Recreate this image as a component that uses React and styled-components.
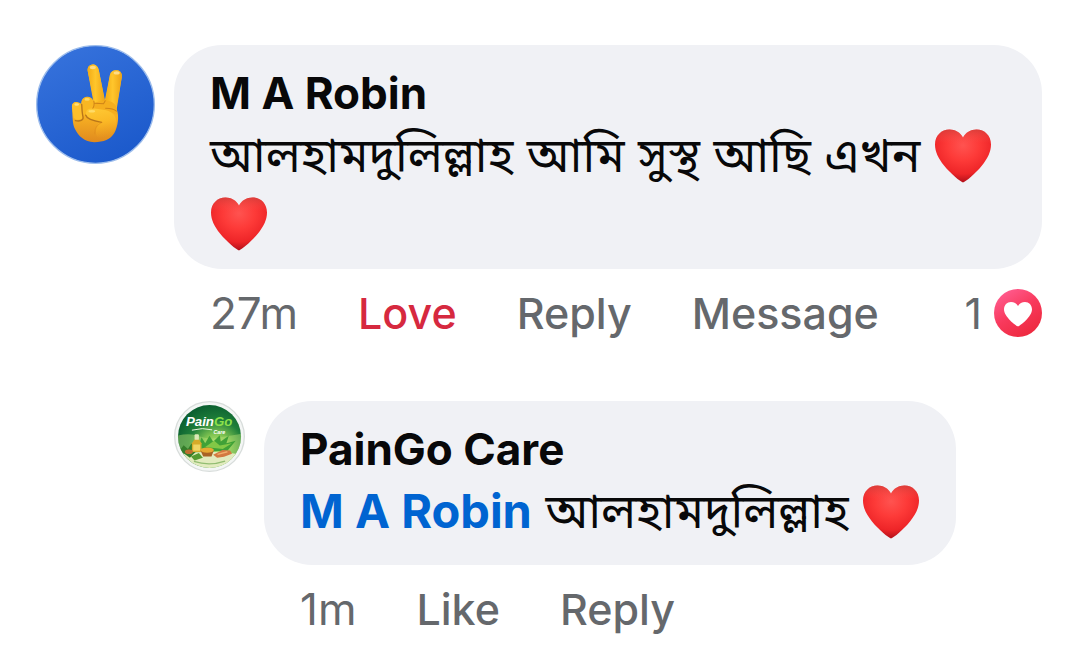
import React from 'react';
import styled, { createGlobalStyle } from 'styled-components';


const GlobalStyle = createGlobalStyle`
    * { box-sizing: border-box; }
    body {
        margin: 0;
        background: #ffffff;
        color: #080809;
        font-family: Inter, "Noto Sans Bengali", "Noto Sans", sans-serif;
    }
`

const Thread = styled.main`
    display: flex;
    flex-direction: column;
    gap: 60px;
    padding: 45px 36px 0 36px;
`

const Comment = styled.article`
    display: flex;
    align-items: flex-start;
    gap: 19px;
    margin-left: ${(props) => (props.$nested ? '138px' : '0')};
`

const AvatarLink = styled.a`
    flex: none;
    width: ${(props) => props.$size};
    height: ${(props) => props.$size};

    svg { display: block; width: 100%; height: 100%; }
`

const Content = styled.div`
    flex: 1;
    min-width: 0;
`

const Bubble = styled.div`
    width: fit-content;
    max-width: 100%;
    padding: ${(props) => (props.$nested ? '20px 36px' : '20px 36px 12px')};
    border-radius: 48px;
    background: #f0f1f5;
`

const Author = styled.a`
    display: block;
    color: inherit;
    font-size: 44px;
    font-weight: 700;
    line-height: 56px;
    text-decoration: none;
`

const Message = styled.p`
    margin: 0;
    font-size: 48px;
    line-height: 68px;
`

const Mention = styled.a`
    color: #0064d1;
    font-size: 47px;
    font-weight: 700;
    line-height: 56px;
    text-decoration: none;
`

const HeartIcon = styled.svg`
    display: inline-block;
    width: 58px;
    height: 56px;
    vertical-align: -12px;
`

const Actions = styled.div`
    display: flex;
    align-items: center;
    gap: 60px;
    margin-top: 16px;
    padding-left: 36px;
    color: #65686c;
    font-size: 43px;
    line-height: 56px;
`

const Timestamp = styled.time`
    font-size: 44px;
`

const Action = styled.button`
    padding: 0;
    border: 0;
    background: none;
    color: ${(props) => (props.$active ? '#d6293f' : 'inherit')};
    font: inherit;
    font-weight: 500;
    cursor: pointer;
`

const Reactions = styled.button`
    display: flex;
    align-items: center;
    gap: 12px;
    margin-left: auto;
    padding: 0;
    border: 0;
    background: none;
    color: inherit;
    font: inherit;

    svg { width: 48px; height: 48px; }
`

const heartPath = 'M29 54.5C26 53.5 17 46 10 37.5C4.5 30.5 1 24 1 16.5C1 7.5 7.5 1.5 15.5 1.5C21.5 1.5 26.5 4.5 29 9.5C31.5 4.5 36.5 1.5 42.5 1.5C50.5 1.5 57 7.5 57 16.5C57 24 53.5 30.5 48 37.5C41 46 32 53.5 29 54.5Z'

const Heart = () => (
    <HeartIcon viewBox="0 0 58 56" role="img" aria-label="Red heart">
        <defs>
            <radialGradient id="heartFill" cx="0.5" cy="0.3" r="0.72">
                <stop offset="0" stopColor="#ff5350" />
                <stop offset="0.4" stopColor="#fd3a38" />
                <stop offset="0.75" stopColor="#ee2528" />
                <stop offset="1" stopColor="#a90d18" />
            </radialGradient>
            <linearGradient id="heartTop" x1="0" y1="0" x2="0" y2="1">
                <stop offset="0" stopColor="#c8453f" stopOpacity="0.6" />
                <stop offset="0.25" stopColor="#f65a55" stopOpacity="0" />
            </linearGradient>
        </defs>
        <path d={heartPath} fill="url(#heartFill)" />
        <path d={heartPath} fill="url(#heartTop)" />
    </HeartIcon>
)

const LoveBadge = () => (
    <svg viewBox="0 0 48 48" aria-hidden="true">
        <defs>
            <linearGradient id="loveFill" x1="0.15" y1="0.1" x2="0.7" y2="0.95">
                <stop offset="0" stopColor="#ff5a8c" />
                <stop offset="0.5" stopColor="#f8395c" />
                <stop offset="1" stopColor="#ee2a40" />
            </linearGradient>
        </defs>
        <circle cx="24" cy="24" r="24" fill="url(#loveFill)" />
        <path
            d="M24 37.5C22 37 10 27.5 10 20.5C10 16 13 13 17 13C20 13 22.5 14.5 24 17C25.5 14.5 28 13 31 13C35 13 38 16 38 20.5C38 27.5 26 37 24 37.5Z"
            fill="#ffffff"
        />
    </svg>
)

const VictoryAvatar = () => (
    <svg viewBox="33 34 354 354" role="img" aria-label="M A Robin">
        <defs>
            <linearGradient id="blueBg" x1="0.2" y1="0" x2="0.7" y2="1">
                <stop offset="0" stopColor="#3672dc" />
                <stop offset="1" stopColor="#1b59cb" />
            </linearGradient>
            <linearGradient id="fingerFill" x1="0" y1="0" x2="1" y2="0">
                <stop offset="0" stopColor="#f2ab16" />
                <stop offset="0.45" stopColor="#ffc62c" />
                <stop offset="1" stopColor="#eea315" />
            </linearGradient>
            <linearGradient id="palmFill" x1="0" y1="0" x2="0" y2="1">
                <stop offset="0" stopColor="#fdbe27" />
                <stop offset="0.65" stopColor="#f8b223" />
                <stop offset="1" stopColor="#e08a1e" />
            </linearGradient>
            <linearGradient id="thumbFill" x1="0" y1="0" x2="0.2" y2="1">
                <stop offset="0" stopColor="#ffca35" />
                <stop offset="0.5" stopColor="#fbb926" />
                <stop offset="1" stopColor="#f2a521" stopOpacity="0" />
            </linearGradient>
        </defs>
        <circle cx="210" cy="211" r="175" fill="url(#blueBg)" stroke="#9dbdec" strokeWidth="4" />
        <path
            d="M140 218C139 207 147 202 156 204C162 204 167 207 168 210C168 195 175 188 188 188C196 189 200 193 203 199L187 112C185 101 191 93 202 92C212 92 218 99 220 110L238 198L253 123C256 112 263 108 274 109C285 111 290 119 288 131L273 225C281 246 277 276 266 296C254 316 235 323 206 323C177 322 159 305 149 284C141 270 142 244 140 218Z"
            fill="url(#palmFill)"
        />
        <path d="M187 112C185 101 191 93 202 92C212 92 218 99 220 110L238 203L207 207Z" fill="url(#fingerFill)" />
        <path d="M253 123C256 112 263 108 274 109C285 111 290 119 288 131L272 220L239 203Z" fill="url(#fingerFill)" />
        <ellipse cx="202" cy="101" rx="9" ry="5" fill="#ffdc85" />
        <ellipse cx="273" cy="117" rx="9" ry="5" fill="#ffdc85" />
        <path d="M168 209C168 195 176 188 188 189C199 191 204 200 204 214L203 224C190 224 182 229 181 244L170 240Z" fill="#f9b722" />
        <path d="M140 218C140 208 147 203 157 205C165 207 168 214 169 223L171 250C169 258 150 260 145 249Z" fill="#fdbf2c" />
        <path d="M207 207C222 199 248 196 264 207C273 214 276 230 273 243C259 234 236 225 207 223Z" fill="#f5ae1e" />
        <path
            d="M182 235C183 226 191 222 204 223L238 227C263 232 274 248 272 269C270 293 251 311 228 316C208 312 206 285 221 263C210 260 200 257 193 253C184 249 180 243 182 235Z"
            fill="url(#thumbFill)"
        />
        <path d="M169 211C170 227 170 239 173 248C175 258 164 262 150 259M181 243C184 254 199 259 228 264" fill="none" stroke="#b8761a" strokeWidth="4" strokeLinecap="round" />
        <path d="M205 201C207 210 206 217 202 222M208 207L234 209L239 200M272 231C266 225 254 222 240 222" fill="none" stroke="#cf8417" strokeWidth="3" strokeLinecap="round" />
        <path d="M228 264C214 272 206 284 208 298" fill="none" stroke="#dc8b1d" strokeWidth="3" strokeLinecap="round" opacity="0.6" />
        <ellipse cx="154" cy="211" rx="7" ry="4" fill="#ffe17d" />
        <ellipse cx="185" cy="196" rx="8" ry="4" fill="#ffd865" />
        <ellipse cx="199" cy="231" rx="10" ry="4" fill="#ffdb68" />
    </svg>
)

const PainGoAvatar = () => (
    <svg viewBox="30 31 214 214" role="img" aria-label="PainGo Care">
        <defs>
            <clipPath id="logoClip"><circle cx="137" cy="138" r="95" /></clipPath>
            <radialGradient id="leafBg" cx="0.6" cy="0.68" r="0.72">
                <stop offset="0" stopColor="#c8ee7d" />
                <stop offset="0.3" stopColor="#7fc451" />
                <stop offset="0.6" stopColor="#1f7f3a" />
                <stop offset="1" stopColor="#07592e" />
            </radialGradient>
        </defs>
        <circle cx="137" cy="138" r="105" fill="#f4f6f5" stroke="#d8dddb" strokeWidth="4" />
        <g clipPath="url(#logoClip)">
            <rect x="40" y="40" width="195" height="195" fill="url(#leafBg)" />
            <path d="M42 135Q75 128 97 135T142 145L235 130V192H42Z" fill="#b5df75" opacity="0.45" />
            <path d="M42 192Q137 176 235 192V240H42Z" fill="#e2ebbe" />
            <path d="M104 168L113 140L124 158L137 136L148 154L168 134L171 153L195 136L188 158L216 151L191 181L125 184Z" fill="#3fa137" />
            <path d="M124 170L151 151L168 165L205 158L177 176Z" fill="#82c846" />
            <path d="M47 180L59 164L72 176L83 158L96 184L78 202Z" fill="#357d2a" />
            <rect x="92" y="131" width="13" height="18" rx="3" fill="#dce9b6" />
            <path d="M91 148H106L113 158V185H84V158Z" fill="#d7ab29" />
            <path d="M88 162H109V181H88Z" fill="#f0d563" />
            <path d="M110 180Q130 165 150 180L143 198H118Z" fill="#a96325" />
            <ellipse cx="130" cy="179" rx="20" ry="8" fill="#e6a832" />
            <path d="M148 193L176 179L199 180L205 190L181 199L160 202Z" fill="#d37940" />
            <path d="M161 192L191 184" stroke="#f1ad6b" strokeWidth="4" />
            <ellipse cx="75" cy="184" rx="12" ry="7" fill="#bd6e2f" />
            <path d="M81 198L105 188L117 202L92 210Z" fill="#559a31" />
            <path d="M90 213Q137 228 184 212" fill="none" stroke="#92bd72" strokeWidth="4" />
        </g>
        <text x="66" y="106" fontFamily="Liberation Sans, sans-serif" fontSize="40" fontStyle="italic" fontWeight="700" fill="#ffffff">
            Pain<tspan fill="#8be04a">Go</tspan>
        </text>
        <path d="M84 119Q116 110 145 118" fill="none" stroke="#e9f5df" strokeWidth="3" />
        <text x="149" y="129" fontFamily="Liberation Sans, sans-serif" fontSize="16" fontStyle="italic" fontWeight="700" fill="#ffffff">Care</text>
    </svg>
)

const App = () => {
    return(
        <React.Fragment>
            <GlobalStyle />
            <Thread>
                <Comment>
                    <AvatarLink href="#robin" $size="119px"><VictoryAvatar /></AvatarLink>
                    <Content>
                        <Bubble>
                            <Author href="#robin">M A Robin</Author>
                            <Message lang="bn">আলহামদুলিল্লাহ আমি সুস্থ আছি এখন <Heart /> <Heart /></Message>
                        </Bubble>
                        <Actions>
                            <Timestamp>27m</Timestamp>
                            <Action type="button" $active>Love</Action>
                            <Action type="button">Reply</Action>
                            <Action type="button">Message</Action>
                            <Reactions type="button">
                                <span>1</span>
                                <LoveBadge />
                            </Reactions>
                        </Actions>
                    </Content>
                </Comment>
                <Comment $nested>
                    <AvatarLink href="#paingo" $size="71px"><PainGoAvatar /></AvatarLink>
                    <Content>
                        <Bubble $nested>
                            <Author href="#paingo">PainGo Care</Author>
                            <Message lang="bn"><Mention href="#robin">M A Robin</Mention> আলহামদুলিল্লাহ <Heart /></Message>
                        </Bubble>
                        <Actions>
                            <Timestamp>1m</Timestamp>
                            <Action type="button">Like</Action>
                            <Action type="button">Reply</Action>
                        </Actions>
                    </Content>
                </Comment>
            </Thread>
        </React.Fragment>
    );
}

export default App;
